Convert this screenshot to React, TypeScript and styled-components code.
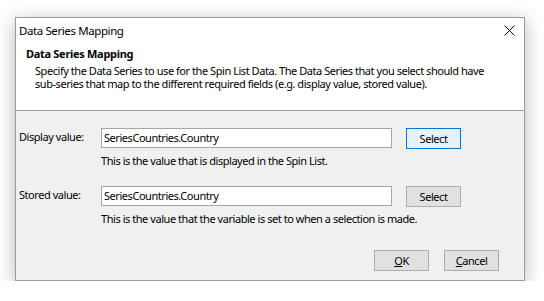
import React from "react";
import styled, { createGlobalStyle } from "styled-components";

const GlobalStyle = createGlobalStyle`
  html, body {
    margin: 0;
    padding: 0;
    background: #ffffff;
  }
  body {
    font-family: "Noto Sans", "Open Sans", "Liberation Sans", sans-serif;
    font-size: 11px;
    letter-spacing: -0.45px;
    color: #000;
  }
`;

const Page = styled.div`
  padding: 17px 0 0 15px;
`;

const Window = styled.div`
  box-sizing: border-box;
  width: 510px;
  height: 264px;
  border: 1px solid #9b9b9b;
  background: #f0f0f0;
  box-shadow: 0 4px 18px rgba(0, 0, 0, 0.28);
  display: flex;
  flex-direction: column;
`;

const TitleBar = styled.div`
  box-sizing: border-box;
  height: 26px;
  background: #fff;
  display: flex;
  align-items: center;
  justify-content: space-between;
  padding: 0 9px 2px 3px;
`;

const TitleText = styled.span`
  font-size: 11.5px;
  letter-spacing: -0.4px;
`;

const Close = styled.div`
  width: 12px;
  height: 12px;
  display: flex;
  align-items: center;
  justify-content: center;
  margin-top: 1px;
`;

const Header = styled.div`
  background: #fff;
  border-bottom: 1px solid #a0a0a0;
  height: 67px;
  box-sizing: border-box;
  padding: 2px 0 0 10px;
`;

const HeaderTitle = styled.div`
  font-weight: bold;
  line-height: 15px;
  letter-spacing: -0.3px;
`;

const HeaderText = styled.div`
  padding-left: 9px;
  margin-top: 3px;
`;

const HeaderLine = styled.div`
  line-height: 13px;
  height: 13px;
  white-space: nowrap;
`;

const Body = styled.div`
  flex: 1;
  display: flex;
  flex-direction: column;
  padding: 17px 0 0 3px;
`;

const Field = styled.div<{ $gap?: number }>`
  display: grid;
  grid-template-columns: 68px 291px 55px;
  column-gap: 14px;
  row-gap: 4px;
  margin-bottom: ${(p) => p.$gap ?? 0}px;
`;

const Label = styled.div`
  padding-top: 1px;
  line-height: 15px;
  white-space: nowrap;
`;

const Input = styled.div`
  box-sizing: border-box;
  height: 20px;
  border: 1px solid #a6a6a6;
  background: #fff;
  padding: 0 2px;
  line-height: 18px;
  white-space: nowrap;
`;

const Hint = styled.div`
  grid-column: 2 / 4;
  line-height: 15px;
  white-space: nowrap;
`;

const Button = styled.div<{ $focused?: boolean }>`
  box-sizing: border-box;
  height: 21px;
  width: 55px;
  border: 1px solid ${(p) => (p.$focused ? "#0078d7" : "#adadad")};
  background: ${(p) => (p.$focused ? "#e5f1fb" : "#e1e1e1")};
  display: flex;
  align-items: center;
  justify-content: center;
  line-height: 15px;
`;

const Footer = styled.div`
  margin-top: auto;
  display: flex;
  justify-content: flex-end;
  gap: 15px;
  padding: 0 25px 9px 0;
`;

const App = () => {
  return (
    <>
      <GlobalStyle />
      <Page>
        <Window>
          <TitleBar>
            <TitleText>Data Series Mapping</TitleText>
            <Close>
              <svg width="11" height="11" viewBox="0 0 11 11">
                <path d="M0.5 0.5 L10.5 10.5 M10.5 0.5 L0.5 10.5" stroke="#000" strokeWidth="1" fill="none" />
              </svg>
            </Close>
          </TitleBar>
          <Header>
            <HeaderTitle>Data Series Mapping</HeaderTitle>
            <HeaderText>
              <HeaderLine>
                Specify the Data Series to use for the Spin List Data. The Data Series that you select should have
              </HeaderLine>
              <HeaderLine>
                sub-series that map to the different required fields (e.g. display value, stored value).
              </HeaderLine>
            </HeaderText>
          </Header>
          <Body>
            <Field $gap={18}>
              <Label>Display value:</Label>
              <Input>SeriesCountries.Country</Input>
              <Button $focused>Select</Button>
              <div />
              <Hint>This is the value that is displayed in the Spin List.</Hint>
            </Field>
            <Field>
              <Label>Stored value:</Label>
              <Input>SeriesCountries.Country</Input>
              <Button>Select</Button>
              <div />
              <Hint>This is the value that the variable is set to when a selection is made.</Hint>
            </Field>
            <Footer>
              <Button>
                <u>O</u>K
              </Button>
              <Button>
                <u>C</u>ancel
              </Button>
            </Footer>
          </Body>
        </Window>
      </Page>
    </>
  );
};

export default App;
